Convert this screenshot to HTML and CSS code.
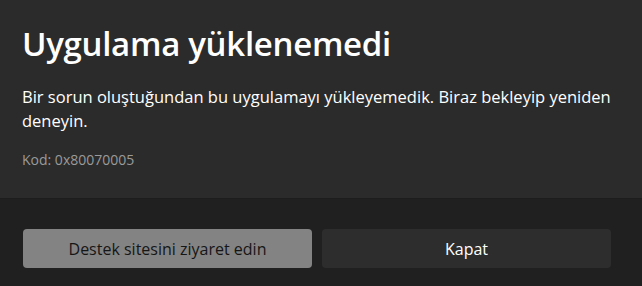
FILE: index.html
```html
<!DOCTYPE html>
<html lang="tr">
<head>
<meta charset="utf-8">
<link rel="stylesheet" href="styles.css">
</head>
<body>
<div class="dialog">
  <section class="content">
    <h1 class="title">Uygulama yüklenemedi</h1>
    <p class="message">Bir sorun oluştuğundan bu uygulamayı yükleyemedik. Biraz bekleyip yeniden deneyin.</p>
    <p class="code">Kod: 0x80070005</p>
  </section>
  <footer class="actions">
    <button class="btn btn-primary">Destek sitesini ziyaret edin</button>
    <button class="btn btn-secondary">Kapat</button>
  </footer>
</div>
</body>
</html>
```
FILE: styles.css
```css
html, body {
  margin: 0;
  padding: 0;
  background: #202020;
}
body {
  width: 642px;
  height: 286px;
  overflow: hidden;
  font-family: "Open Sans", "Noto Sans", sans-serif;
}
.dialog {
  display: flex;
  flex-direction: column;
  height: 286px;
}
.content {
  height: 199px;
  box-sizing: border-box;
  background: #2b2b2b;
  border-bottom: 1px solid #1d1d1d;
  padding: 22px 22px 0 22px;
}
.title {
  margin: 0;
  font-size: 33px;
  font-weight: 600;
  letter-spacing: -0.3px;
  color: #ffffff;
  line-height: 44px;
}
.message {
  margin: 19px 0 0 0;
  font-size: 16.5px;
  line-height: 24px;
  color: #ffffff;
  width: 600px;
}
.code {
  margin: 18px 0 0 0;
  font-size: 14px;
  line-height: 18px;
  color: #9a9a9a;
}
.actions {
  flex: 1;
  display: flex;
  gap: 10px;
  padding: 30px 31px 0 23px;
}
.btn {
  flex: 1;
  height: 39px;
  border: none;
  border-radius: 4px;
  font-family: inherit;
  font-size: 16px;
}
.btn-primary {
  background: #838383;
  color: #161616;
}
.btn-secondary {
  background: #2d2d2d;
  color: #ffffff;
}
```
